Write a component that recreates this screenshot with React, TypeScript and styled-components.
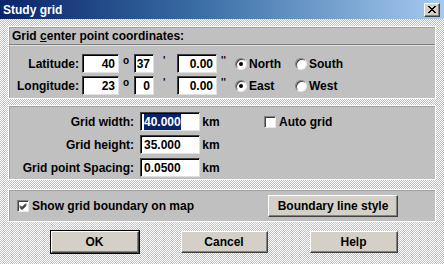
import React from "react";
import styled, { createGlobalStyle, css } from "styled-components";

const Global = createGlobalStyle`
  html, body { margin: 0; padding: 0; }
  body { font-family: "Liberation Sans", Arial, sans-serif; font-size: 12px; font-weight: bold; color: #000; }
`;

const Window = styled.div`
  width: 444px;
  height: 264px;
  display: flex;
  flex-direction: column;
  background: repeating-conic-gradient(#c0c0c0 0 25%, #ffffff 0 50%) 0 0 / 2px 2px;
  overflow: hidden;
`;

const TitleBar = styled.div`
  height: 19px;
  flex: none;
  display: flex;
  align-items: center;
  justify-content: space-between;
  padding: 0 4px 0 3px;
  background: linear-gradient(to right, #0a246a, #3a6ea5 45%, #a6caf0);
  color: #fff;
  font-size: 12px;
`;

const CloseBtn = styled.div`
  width: 14px;
  height: 12px;
  display: flex;
  align-items: center;
  justify-content: center;
  background: #d4d0c8;
  border: 1px solid;
  border-color: #fff #404040 #404040 #fff;
  box-shadow: inset -1px -1px #808080;
`;

const Body = styled.div`
  flex: 1;
  display: flex;
  flex-direction: column;
  padding: 7px 8px 0 8px;
`;

const Panel = styled.div<{ $h: number; $mb: number }>`
  height: ${(p) => p.$h}px;
  margin-bottom: ${(p) => p.$mb}px;
  box-sizing: border-box;
  background: #c0c0c0;
  border: 1px solid #fff;
  box-shadow: inset 1px 1px #a0a0a0;
  display: flex;
  flex-direction: column;
`;

const Header = styled.div`
  height: 15px;
  padding: 2px 0 0 3px;
  border-bottom: 1px solid #808080;
  box-shadow: 0 1px #e0e0e0;
  line-height: 14px;
`;

const U = styled.span`
  text-decoration: underline;
`;

const Rows = styled.div<{ $pt: number; $gap: number }>`
  display: flex;
  flex-direction: column;
  padding-top: ${(p) => p.$pt}px;
  gap: ${(p) => p.$gap}px;
`;

const Row = styled.div`
  display: flex;
  align-items: center;
  height: 19px;
`;

const Label = styled.div<{ $w: number }>`
  width: ${(p) => p.$w}px;
  text-align: right;
  flex: none;
  white-space: nowrap;
`;

const Field = styled.div<{ $w: number; $align?: string }>`
  width: ${(p) => p.$w}px;
  height: 19px;
  flex: none;
  box-sizing: border-box;
  background: #fff;
  border: 1px solid;
  border-color: #404040 #e0e0e0 #e0e0e0 #404040;
  box-shadow: inset 1px 1px #000;
  display: flex;
  align-items: center;
  justify-content: ${(p) => (p.$align === "left" ? "flex-start" : "flex-end")};
  padding: 0 3px 0 3px;
  font-size: 12px;
  line-height: 16px;
`;

const Sel = styled.span`
  background: #0a246a;
  color: #fff;
`;

const Unit = styled.div<{ $w: number; $pl?: number; $raise?: boolean }>`
  width: ${(p) => p.$w}px;
  flex: none;
  box-sizing: border-box;
  padding-left: ${(p) => p.$pl ?? 0}px;
  text-align: ${(p) => (p.$pl !== undefined ? "left" : "center")};
  ${(p) =>
    p.$raise &&
    css`
      font-size: 10px;
      position: relative;
      top: -3px;
    `}
`;

const Choice = styled.div<{ $w: number }>`
  width: ${(p) => p.$w}px;
  flex: none;
  display: flex;
  align-items: center;
  gap: 2px;
`;

const RadioDot = styled.div<{ $on?: boolean }>`
  width: 12px;
  height: 12px;
  box-sizing: border-box;
  border-radius: 50%;
  background: #fff;
  border: 1px solid;
  border-color: #808080 #e8e8e8 #e8e8e8 #808080;
  box-shadow: inset 1px 1px #404040;
  display: flex;
  align-items: center;
  justify-content: center;
  &::after {
    content: "";
    width: 4px;
    height: 4px;
    border-radius: 50%;
    background: ${(p) => (p.$on ? "#000" : "transparent")};
  }
`;

const Check = styled.div`
  width: 12px;
  height: 12px;
  flex: none;
  box-sizing: border-box;
  background: #fff;
  border: 1px solid;
  border-color: #808080 #e8e8e8 #e8e8e8 #808080;
  box-shadow: inset 1px 1px #404040;
  display: flex;
  align-items: center;
  justify-content: center;
`;

const CheckItem = styled.div<{ $ml: number }>`
  display: flex;
  align-items: center;
  gap: 3px;
  margin-left: ${(p) => p.$ml}px;
`;

const BoundaryRow = styled.div`
  flex: 1;
  display: flex;
  align-items: center;
  padding-left: 8px;
  padding-right: 37px;
  justify-content: space-between;
`;

const Button = styled.div<{ $w: number; $default?: boolean }>`
  width: ${(p) => p.$w}px;
  height: 22px;
  box-sizing: border-box;
  background: #d4d0c8;
  border: 1px solid;
  border-color: #fff #404040 #404040 #fff;
  box-shadow: inset -1px -1px #808080;
  display: flex;
  align-items: center;
  justify-content: center;
  ${(p) =>
    p.$default &&
    css`
      outline: 1px solid #000;
    `}
`;

const ButtonRow = styled.div`
  display: flex;
  justify-content: center;
  gap: 42px;
  padding-left: 4px;
`;

function Radio({ on, label, w }: { on?: boolean; label: string; w: number }) {
  return (
    <Choice $w={w}>
      <RadioDot $on={on} />
      <span>{label}</span>
    </Choice>
  );
}

function CoordRow({ label, deg, min, dir1, dir2 }: { label: string; deg: string; min: string; dir1: string; dir2: string }) {
  return (
    <Row>
      <Label $w={70}>{label}</Label>
      <Unit $w={3} />
      <Field $w={37}>{deg}</Field>
      <Unit $w={15} $pl={4} $raise>o</Unit>
      <Field $w={20}>{min}</Field>
      <Unit $w={23} $pl={9} $raise>'</Unit>
      <Field $w={40}>0.00</Field>
      <Unit $w={18} $pl={4} $raise>''</Unit>
      <Radio on label={dir1} w={60} />
      <Radio label={dir2} w={60} />
    </Row>
  );
}

function SizeRow({ label, children }: { label: string; children: React.ReactNode }) {
  return (
    <Row>
      <Label $w={125}>{label}</Label>
      <Unit $w={6} />
      <Field $w={60} $align="left">{children}</Field>
      <Unit $w={22}>km</Unit>
    </Row>
  );
}

export default function App() {
  return (
    <>
      <Global />
      <Window>
        <TitleBar>
          <span>Study grid</span>
          <CloseBtn>
            <svg width="8" height="7" viewBox="0 0 8 7">
              <path d="M0 0L7 7M1 0L8 7M7 0L0 7M8 0L1 7" stroke="#000" strokeWidth="1" />
            </svg>
          </CloseBtn>
        </TitleBar>
        <Body>
          <Panel $h={73} $mb={6}>
            <Header>
              Grid <U>c</U>enter point coordinates:
            </Header>
            <Rows $pt={9} $gap={3}>
              <CoordRow label="Latitude:" deg="40" min="37" dir1="North" dir2="South" />
              <CoordRow label="Longitude:" deg="23" min="0" dir1="East" dir2="West" />
            </Rows>
          </Panel>
          <Panel $h={75} $mb={9}>
            <Rows $pt={6} $gap={4}>
              <Row>
                <Label $w={125}>Grid width:</Label>
                <Unit $w={6} />
                <Field $w={60} $align="left">
                  <Sel>40.000</Sel>
                </Field>
                <Unit $w={22}>km</Unit>
                <CheckItem $ml={42}>
                  <Check />
                  <span>Auto grid</span>
                </CheckItem>
              </Row>
              <SizeRow label="Grid height:">35.000</SizeRow>
              <SizeRow label="Grid point Spacing:">0.0500</SizeRow>
            </Rows>
          </Panel>
          <Panel $h={33} $mb={9}>
            <BoundaryRow>
              <CheckItem $ml={0}>
                <Check>
                  <svg width="8" height="8" viewBox="0 0 8 8">
                    <path d="M1 3.5L3 5.5L7 1.5M1 4.5L3 6.5L7 2.5M1 5.5L3 7.5L7 3.5" stroke="#000" strokeWidth="1" fill="none" />
                  </svg>
                </Check>
                <span>Show grid boundary on map</span>
              </CheckItem>
              <Button $w={130}>Boundary line style</Button>
            </BoundaryRow>
          </Panel>
          <ButtonRow>
            <Button $w={88} $default>OK</Button>
            <Button $w={87}>Cancel</Button>
            <Button $w={88}>Help</Button>
          </ButtonRow>
        </Body>
      </Window>
    </>
  );
}
